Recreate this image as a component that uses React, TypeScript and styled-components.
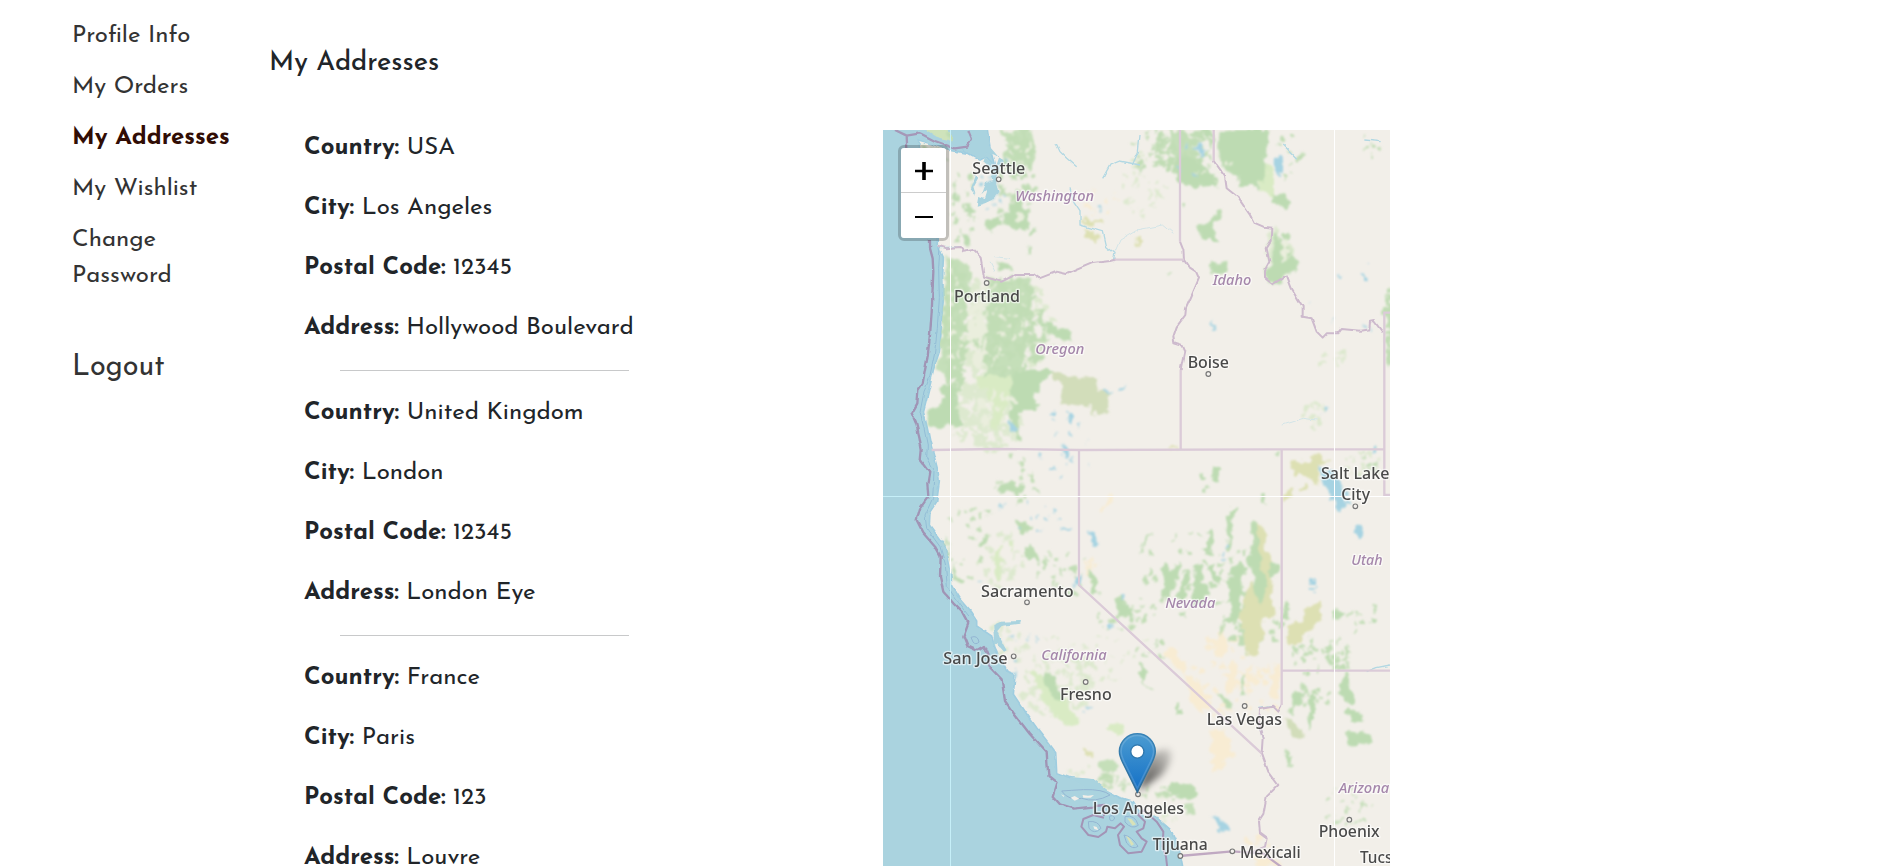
import React from "react";
import styled, { createGlobalStyle } from "styled-components";

const GlobalStyle = createGlobalStyle`
  body {
    margin: 0;
    background: #fff;
    color: #212529;
    font-family: "Josefin Sans", Lato, sans-serif;
    font-size: 24px;
    line-height: 36px;
  }
`;

const Page = styled.div`
  display: flex;
  height: 866px;
  overflow: hidden;
`;

const Sidebar = styled.nav`
  display: flex;
  flex-direction: column;
  gap: 15px;
  box-sizing: border-box;
  width: 269px;
  flex: none;
  padding: 18px 31px 0 72px;
`;

const NavItem = styled.a<{ $active?: boolean }>`
  color: ${(p) => (p.$active ? "#310d05" : "#333")};
  font-weight: ${(p) => (p.$active ? 700 : 400)};
`;

const Logout = styled.a`
  margin-top: 41px;
  font-size: 28.8px;
  color: #333;
`;

const Main = styled.main`
  flex: 1;
`;

const Title = styled.h5`
  margin: 0;
  padding-top: 46px;
  height: 84px;
  font-size: 27px;
  line-height: 36px;
  font-weight: 500;
`;

const Columns = styled.div`
  display: flex;
`;

const AddressList = styled.div`
  width: 579px;
  flex: none;
  padding-left: 35px;
`;

const Address = styled.section`
  display: flex;
  flex-direction: column;
  gap: 24px;
  width: 360px;

  & + & {
    margin-top: 24px;
  }

  &:not(:last-child)::after {
    content: "";
    width: 289px;
    height: 1px;
    margin-left: 36px;
    background: #c8c9ca;
  }
`;

const Field = styled.p`
  margin: 0;
  white-space: nowrap;
`;

const FieldName = styled.strong`
  font-weight: 700;
`;

const MapFrame = styled.div`
  position: relative;
  width: 507px;
  height: 736px;
  overflow: hidden;
  background: #f2efe9;
`;

const MapCanvas = styled.svg`
  display: block;
  width: 507px;
  height: 736px;
`;

const ZoomControl = styled.div`
  position: absolute;
  top: 15px;
  left: 15px;
  display: flex;
  flex-direction: column;
  border: 3px solid rgba(0, 0, 0, 0.2);
  border-radius: 6px;
  background-clip: padding-box;
`;

const ZoomButton = styled.button<{ $first?: boolean }>`
  display: block;
  box-sizing: border-box;
  width: 45px;
  height: 45px;
  padding: 0;
  border: 0;
  border-bottom: ${(p) => (p.$first ? "1px solid #ccc" : "0")};
  border-radius: ${(p) => (p.$first ? "3px 3px 0 0" : "0 0 3px 3px")};
  background: #fff;

  svg {
    display: block;
  }
`;

const CityName = styled.text`
  font-family: "Noto Sans", sans-serif;
  font-size: 46px;
  font-weight: 500;
  fill: #4a4a4a;
  stroke: rgba(255, 255, 255, 0.6);
  stroke-width: 8px;
  stroke-linejoin: round;
  paint-order: stroke;
`;

const StateName = styled(CityName)`
  font-size: 44px;
  font-style: italic;
  fill: #a587ab;
`;

/* Small irregular patches, spread over an ellipse. */
function speckle(seed: number, cx: number, cy: number, rx: number, ry: number, n: number, size: number) {
  let s = seed * 7919 + 13;
  const rnd = () => {
    s = (s * 16807) % 2147483647;
    return s / 2147483647;
  };
  rnd();
  let d = "";
  for (let i = 0; i < n; i++) {
    const a = rnd() * Math.PI * 2;
    const r = Math.sqrt(rnd());
    const x = cx + Math.cos(a) * r * rx;
    const y = cy + Math.sin(a) * r * ry;
    const w = size * (0.4 + rnd());
    const h = size * (0.4 + rnd());
    d += `M${x.toFixed(0)} ${y.toFixed(0)}l${w.toFixed(0)} ${(-h / 3).toFixed(0)}l${(w / 3).toFixed(0)} ${h.toFixed(0)}l${(-w).toFixed(0)} ${(h / 3).toFixed(0)}z`;
  }
  return d;
}

const LAND =
  "M200 15L235 60L262 85L300 105L318 95L345 125L330 70L320 0H1560V2250H912L898 2173L870 2113L830 2078L790 2073L760 2030L720 2018L680 1998L640 1965L570 1958L530 1943L527 1883L505 1853L470 1808L430 1753L400 1708L405 1648L380 1638L345 1568L335 1533L290 1503L290 1485L270 1455L240 1420L215 1380L212 1340L205 1300L195 1265L170 1230L148 1200L150 1160L170 1130L178 1070L172 1030L160 985L150 950L140 900L130 860L145 800L160 735L178 680L185 600L190 520L188 450L190 400L172 360L170 300L150 200L120 100L112 45L150 55L205 75L262 85L240 60z";

const SHORE_LINE =
  "M150 345L150 370L158 400L160 440L155 560L150 630L142 700L135 735L128 775L115 795L112 835L95 865L108 895L118 935L125 975L122 1005L148 1040L142 1075L145 1115L120 1150L110 1185L130 1225L165 1265L182 1295L180 1355L190 1400L220 1435L250 1465L265 1493L250 1533L262 1563L290 1576L312 1563L325 1593L328 1625L365 1663L375 1728L400 1763L450 1828L500 1883L505 1953L530 1973L518 2013L540 2038L580 2051L640 2045L670 2040L672 2070";

const INNER_LINE =
  "M180 365L176 430L178 520L172 610L163 690L148 760L132 800L120 862L132 910L142 960L140 1000L162 1040L158 1120L135 1170L140 1210L180 1265L196 1320L202 1385L235 1432L268 1475";

const RIVER_BORDERS = [
  "M176 362L200 370L240 366L250 380L280 375L302 398L312 455L365 470L410 447L460 447L478 460L530 440L560 447L635 415L690 408L704 404",
  "M900 350L910 375L912 405L925 425L948 440L957 460L940 500L918 550L916 570L890 605L880 635L883 655L905 662L913 680L902 735",
  "M1001 108L1035 155L1040 190L1072 215L1110 270L1122 293L1150 305L1177 308L1175 345L1160 370L1168 410L1155 435V460L1178 478L1205 460L1220 450L1235 490L1268 545V575L1295 580L1310 620L1328 638L1340 625L1375 625L1385 612L1440 617L1468 613L1470 590L1482 588L1508 622",
  "M1205 1740L1195 1760L1180 1745L1140 1753L1137 1800L1148 1840L1145 1885L1165 1940L1195 1980L1160 2015L1150 2070L1137 2090L1140 2125L1160 2140L1155 2165L1115 2182",
];

const STRAIGHT_BORDERS = [
  "M704 404H912",
  "M900 15V350M1001 15V108M902 735V972",
  "M155 975L350 972L600 975L1200 973L1511 973",
  "M597 975V1380L1145 1885",
  "M1205 975V1740",
  "M1205 1637H1540",
  "M1540 563H1513V1110H1540",
];

const WATER_COASTAL = [
  "M9 10H200L225 60L262 80L300 105L310 90L345 125L355 95L325 60L320 10H45L80 35L130 40L205 72z",
  "M320 80L345 90L370 105L360 128L348 170L355 200L335 225L315 235L290 242L295 215L315 222L325 190L305 210L318 175L340 165L328 130L310 112z",
  "M285 150L270 190L285 210L277 185L292 158z",
  "M340 1500L362 1490L420 1488L418 1496L365 1503L352 1518L362 1545L380 1576L372 1580L350 1555L342 1560z",
  "M570 1958L640 1962L700 2010L640 2000z",
];

const LAKES = [
  "M950 60l15 -5l15 20l-12 18l-10 12l-5 -5l8 -15l-8 -14l-15 5z",
  "M1182 100l12 -12l12 20l0 30l-12 10l-14 -20z",
  "M1442 440l12 5l10 25l-4 6l-14 -20z",
  "M545 965l15 0l4 12l-8 20l-12 -6z",
  "M1320 1020l40 20l35 60l10 40l-15 5l-18 -16l-15 0l-28 -60z",
  "M1315 1020l20 5l35 50l10 60l-20 0l-30 -60z",
  "M1365 1115l35 15l-10 24l-25 -10z",
  "M628 1220l14 0l14 38l-10 4l-18 -18z",
  "M583 1350l18 -2l4 20l-8 16l-16 -10z",
  "M565 875l14 0l-2 20l-10 -2z",
  "M385 895l12 0l14 18l-4 18l-18 -16z",
  "M1428 1200l12 -4l12 25l-12 18l-12 -16z",
  "M1476 960l12 -4l0 30l-10 4z",
  "M1326 860l14 -24l10 8l-16 14l-18 12z",
  "M1000 2075l15 0l35 35l-5 14l-20 -6z",
  "M685 1500l18 0l2 12l-14 4z",
  "M387 1645l20 -8l6 18l-12 25l-12 -10z",
  "M545 1208h30v6h-30z",
  "M992 590l6 0l2 25l-8 -2z",
  "M372 108l10 4l-4 8zM650 245l15 5l5 8l-15 -3z",
  "M515 1150l10 5l-8 14l-5 -2zM470 1207l15 6l-8 5zM612 1750h25l-4 6h-20z",
  "M1030 1268h8v7h-8zM1030 1285h8v7h-8zM1030 1303h8v7h-8z",
  "M1290 1365h18v6h-20zM1290 1380h16v5h-18zM1290 1397h14v5h-14z",
  "M350 1140l25 2l-20 10zM515 858h10v7h-10zM480 985h8v12h-10zM295 1365h12l-5 8zM578 1005h8v8h-8z",
  "M725 1405l8 4l0 18l-8 4zM675 800h18v6h-18zM715 785l16 -4l-12 14z",
];

const RIVERS = [
  "M528 55L540 80L560 100L590 125",
  "M668 160L690 120L720 108L780 120",
  "M570 190L580 230L600 260L600 300L670 320L680 365L705 385L700 405",
  "M240 366L180 368",
  "M1210 60L1235 85L1250 100M1450 45L1505 50",
  "M1460 1640L1490 1628L1530 1620",
  "M1138 1750L1175 1745M1137 1800L1148 1840",
  "M780 30L775 80L757 120",
];

const STREAMS = [
  "M705 380L720 345L770 315L850 300L880 325",
  "M1205 900L1270 880L1310 885",
  "M340 395L390 400M330 410L345 440",
];

const FOREST = [
  "M115 50l15 15l35 8l30 15l15 20l-30 -4l-50 -20z",
  "M195 20l60 -5l5 20l-15 25l-40 -20z",
  "M390 235l30 -10l20 30l8 45l-20 15l-50 -15l-12 -25l20 -5z",
  "M250 260l20 -18l16 15l-18 22zM315 290l45 -14l10 15l-40 25l-20 -10z",
  "M355 415l20 5l25 10l-8 8l-38 -8zM440 365l14 0l-4 20l-14 5zM450 315l16 -5l0 15l-12 6z",
  "M220 205l15 0l2 20l-18 5zM250 325l22 0l8 20l-20 18l-12 -15z",
  "M480 600l40 -8l20 15l35 15l0 30l-30 -5l-25 -15z",
  "M185 785l45 -5l5 60l0 25l10 30l-40 10l-55 0l-5 -20l-4 -25l40 -18z",
  "M430 735h90l-10 20l-30 20l-5 25l-20 10l20 25l0 20l-45 0l-15 30l0 30l15 20l-12 12l-20 -30l-8 -60l0 -60l15 -50z",
  "M365 1080l30 -20l15 25l20 -10l8 25l-28 6l-25 -10l-20 5zM455 1085l18 5l-4 15z",
  "M408 1190l25 -5l5 18l20 0l0 10l-30 18l-15 -20z",
  "M440 1260l25 15l15 35l-12 5l-25 -20zM300 1250l20 -15l0 20l-18 6zM310 1165l30 -10l-10 18z",
  "M190 1230l15 15l0 60l30 50l20 10l-15 8l-25 -15l-5 -80z",
  "M880 95l60 0l5 15l35 10l15 25l20 15l-5 25l-80 5l-30 -20l-15 -25l0 -30z",
  "M1022 15h140l0 65l-5 65l-20 30l0 20l-25 -15l-30 0l-20 -30l-35 -20l-10 -50z",
  "M960 15h40v25l-20 -5z",
  "M990 275l15 -10l20 -12l0 20l-20 15l-5 35l15 25l-45 0l-10 -30l-10 -15l30 -5z",
  "M995 412h50l0 18l-15 18l-15 -2l-20 2l-8 -16z",
  "M1185 325l15 10l10 70l20 -10l30 20l-30 30l-35 25l-15 12l-22 -15l0 -30l20 -20z",
  "M1210 320l18 0l0 60l-8 20l-12 -20z",
  "M1180 205l40 10l15 20l-10 12l-30 -10l-16 -10zM905 235l14 5l-12 8zM860 440l10 -5l6 10l-14 4z",
  "M1000 1020l18 0l-4 55l-12 0l-6 -25zM955 1050l15 5l5 10l-14 -2zM973 1090l12 -5l-6 15z",
  "M1145 1105l12 0l0 35l-10 -4zM1185 980l20 -5l-15 10z",
  "M1050 1150l22 -10l-10 40l-10 60l0 40l-12 0l0 -50z",
  "M985 1220l15 0l-2 60l5 15l-14 0l-10 -14l-20 -5l25 -10zM800 1230l20 -15l-30 50l-12 20z",
  "M840 1320l20 -5l20 20l-20 70l-15 20l-5 -20l10 -30zM900 1320l-5 30l-30 70l-20 0l10 -50l40 -60z",
  "M910 1345l20 -5l-15 70l-12 25l-10 -20zM945 1320l20 -5l0 60l20 10l-10 40l-20 20l-20 10l5 -60z",
  "M1055 1325l30 -15l15 20l-20 40l10 30l-20 20l-5 30l-15 -25l0 -60z",
  "M1112 1195l20 0l0 50l10 80l15 50l-10 60l-20 0l0 -80l-20 -40l10 -60z",
  "M1170 1310l20 5l5 35l-20 15l-12 -15zM985 1320l20 0l0 25l18 10l-10 25l-20 -25z",
  "M1060 1430l20 0l0 50l-30 15l-20 -5l20 -20zM1205 1430l15 -10l10 60l-20 5zM900 1460l15 0l5 16l-18 -5z",
  "M1355 1460l20 -5l15 20l-25 10zM1470 1480l20 0l0 16l-15 4z",
  "M780 1620l10 0l5 60l25 10l-5 8l-25 -18l-10 -30zM890 1730l10 -5l0 35l-10 4z",
  "M1090 1640l8 0l-5 70l-12 0zM1015 1708l30 10l12 30l-15 0z",
  "M1395 1640l10 -5l5 60l15 40l-20 5l-25 -35zM1400 1745l40 15l5 30l-20 0l-30 -30z",
  "M1400 1820l60 5l10 15l-15 18l-40 10l-18 -22z",
  "M1290 1715l15 -5l0 70l-14 40l-6 -40zM1240 1700l25 -5l0 40l-20 15zM1220 1875l8 0l4 40l-10 6z",
  "M620 1325l30 20l5 60l-15 5z",
  "M870 1975l60 0l25 20l-10 20l-60 0l-20 -15z",
  "M560 1400l25 -10l5 20l-30 10zM705 1420l20 -10l20 40l15 10l0 30l-20 -20l-20 10z",
  "M490 1640l20 0l35 60l5 30l-20 5l-30 -50z",
];

const FOREST_LIGHT = [
  "M360 20l95 -5l10 60l-5 50l-45 20l0 -45l-30 -30z",
  "M200 395l50 15l25 20l-5 60l-10 60l-10 50l-15 100l-20 50l-45 -20l20 -130z",
  "M330 500l60 -40l65 0l0 80l-15 60l8 60l-20 60l10 20l-30 10l-90 0l-15 -90l20 -90z",
  "M865 20l60 0l25 60l-5 60l-60 0l-10 -70z",
  "M655 1910l40 -10l15 20l0 20l-45 5l-15 -16zM918 2035l20 0l10 30l-30 8z",
];

const WOODS_PALE = [
  "M300 745l60 -10l40 20l-10 60l-30 70l-15 40l-10 -80l-20 -50l-25 -10z",
  "M1140 130l25 -10l20 40l0 60l-25 -20l-20 0z",
  "M345 1280l20 -20l5 60l-15 50l-12 -20zM385 1240l12 20l-4 25z",
  "M455 1633l55 30l40 60l50 70l-30 15l-50 -45l-40 -50z",
  "M690 1798l45 -5l0 20l-20 25l-25 -20z",
];

const RANGE = [
  "M515 735l35 10l40 15l55 0l5 40l35 0l0 65l-50 0l0 -20l-90 -10l0 -60l-20 -20z",
  "M1215 1780l15 0l35 40l5 15l-25 5l-20 -25z",
];

const SCRUB = [
  "M1230 1020l20 -15l40 5l20 -25l15 0l20 25l-30 10l0 60l-40 -30l-30 0z",
  "M1125 1195l15 5l20 25l0 50l20 30l-5 60l0 50l10 50l-15 20l-90 0l15 -70l20 -50l20 30l0 -60z",
  "M605 280l20 5l45 0l0 8l-60 4zM615 315l15 5l28 15l-8 18l-30 -20z",
  "M1270 1460l50 -30l5 60l-25 20l-50 50l-40 -20l20 -35l40 -20z",
  "M1080 1475l60 0l10 60l-30 60l-20 -10l-10 -60z",
  "M1210 1110l30 -25l0 20l-30 30zM1270 1075l12 0l-4 30l-10 -5zM770 335l10 -3v30l-10 0z",
  "M610 1870l35 18l-8 8l-25 -14zM870 964h30v6h-40z",
];

const SAND = [
  "M855 1575l40 -5l5 30l25 30l-15 10l-30 -20l-20 -20z",
  "M910 1640l40 30l30 40l-10 50l-30 -20l-10 -40z",
  "M1010 1520l20 -10l15 30l-10 50l-20 10l-10 -30zM1050 1600l20 30l-5 60l-25 20l-10 -30l10 -30z",
  "M1185 1620l15 0l5 40l-15 60l-20 0l5 -50zM990 1820l40 -10l15 40l20 40l-30 15l-20 40l-20 -5l5 -50z",
  "M680 1115l15 -5l-10 30l-20 20zM1120 2190l60 5l20 30h-70z",
];

type Label = [name: string, x: number, y: number, width: number];

const CITIES: Label[] = [
  ["Seattle", 277, 146, 159],
  ["Portland", 222, 530, 198],
  ["Boise", 923, 730, 124],
  ["Sacramento", 303, 1415, 278],
  ["San Jose", 190, 1617, 193],
  ["Fresno", 540, 1724, 155],
  ["Las Vegas", 980, 1799, 226],
  ["Los Angeles", 638, 2066, 274],
  ["Tijuana", 818, 2176, 165],
  ["Mexicali", 1080, 2198, 182],
  ["Phoenix", 1316, 2135, 183],
  ["Salt Lake", 1323, 1063, 205],
  ["City", 1384, 1125, 86],
];

const STATES: Label[] = [
  ["Washington", 406, 228, 236],
  ["Oregon", 466, 686, 147],
  ["Idaho", 998, 479, 116],
  ["Nevada", 856, 1448, 150],
  ["Utah", 1414, 1321, 94],
  ["California", 484, 1605, 196],
  ["Arizona", 1376, 2003, 152],
];

const DOTS = [
  [356, 163], [320, 474], [985, 747], [441, 1432], [401, 1594], [617, 1671],
  [1094, 1743], [774, 2008], [901, 2193], [1057, 2179], [1408, 2084], [1426, 1144],
];

const FOREST_SPECKLE =
  speckle(1, 900, 70, 90, 60, 90, 13) + speckle(2, 800, 70, 60, 60, 30, 10) +
  speckle(3, 400, 200, 60, 110, 40, 13) + speckle(4, 245, 250, 40, 120, 22, 11) +
  speckle(5, 380, 600, 110, 150, 150, 16) + speckle(6, 215, 600, 35, 200, 130, 16) +
  speckle(45, 410, 80, 50, 60, 50, 14) +
  speckle(7, 400, 1060, 60, 80, 16, 12) + speckle(8, 250, 1240, 60, 120, 16, 12) +
  speckle(9, 550, 1330, 90, 70, 26, 10) + speckle(10, 900, 1330, 130, 110, 30, 12) +
  speckle(11, 1060, 1380, 60, 130, 40, 12) + speckle(12, 1320, 1590, 90, 60, 50, 12) +
  speckle(13, 1280, 1720, 60, 60, 18, 12) + speckle(14, 1400, 2040, 80, 60, 24, 8) +
  speckle(15, 740, 1470, 90, 60, 30, 10) + speckle(16, 820, 1580, 60, 60, 12, 10) +
  speckle(17, 690, 1970, 60, 25, 20, 10) + speckle(18, 860, 2000, 90, 25, 26, 9) +
  speckle(19, 1460, 60, 30, 40, 5, 9) + speckle(20, 1215, 100, 40, 100, 10, 10) +
  speckle(21, 1522, 600, 12, 110, 60, 14) + speckle(22, 1100, 1500, 90, 70, 30, 14) +
  speckle(23, 1440, 1480, 60, 40, 12, 10) + speckle(24, 1470, 1000, 30, 50, 14, 8);

const PALE_SPECKLE =
  speckle(31, 310, 860, 110, 110, 220, 16) + speckle(32, 290, 600, 80, 150, 90, 18) +
  speckle(33, 520, 1680, 110, 110, 90, 13) + speckle(34, 620, 1640, 90, 60, 34, 11) +
  speckle(35, 380, 1540, 60, 60, 22, 11) + speckle(36, 360, 1300, 70, 90, 40, 11) +
  speckle(37, 790, 180, 70, 100, 40, 10) + speckle(38, 1180, 380, 40, 70, 40, 15) +
  speckle(39, 620, 1950, 80, 30, 16, 10) + speckle(40, 880, 2040, 60, 60, 24, 9) +
  speckle(41, 1440, 1010, 50, 40, 20, 10) + speckle(42, 520, 1590, 120, 60, 24, 9) +
  speckle(43, 450, 600, 60, 120, 50, 13) + speckle(44, 700, 1560, 90, 60, 16, 9) +
  speckle(46, 1300, 850, 30, 60, 24, 10) + speckle(47, 1340, 690, 50, 30, 14, 10);

const SAND_SPECKLE =
  speckle(51, 1020, 1640, 90, 130, 50, 13) + speckle(52, 620, 1340, 30, 60, 14, 9) +
  speckle(53, 1140, 2160, 60, 30, 12, 12) + speckle(54, 1120, 1700, 70, 90, 30, 12) +
  speckle(55, 660, 220, 60, 60, 12, 8);

const LAKE_SPECKLE =
  speckle(61, 330, 190, 45, 60, 20, 8) + speckle(62, 560, 950, 90, 110, 12, 7) +
  speckle(63, 480, 1180, 130, 60, 7, 7) + speckle(64, 1400, 500, 120, 140, 6, 6) +
  speckle(65, 430, 1560, 80, 50, 7, 6) + speckle(66, 920, 110, 30, 60, 6, 8);

const CLEARINGS =
  speckle(71, 285, 590, 26, 130, 34, 20) + speckle(72, 330, 840, 50, 60, 20, 18) +
  speckle(73, 370, 600, 80, 130, 40, 9) + speckle(74, 215, 560, 30, 150, 20, 9) +
  speckle(75, 410, 80, 45, 60, 16, 9) + speckle(76, 1000, 130, 60, 60, 14, 8) +
  speckle(77, 410, 272, 8, 6, 3, 14) + speckle(78, 1200, 360, 12, 40, 10, 12);

function Islands() {
  return (
    <g filter="url(#soft)">
      <g fill="none" stroke="#a394b6" strokeWidth={6} strokeLinejoin="round">
        <path d="M672 2078L640 2070L610 2082L604 2105L625 2130L655 2136L678 2120L682 2105L705 2110L722 2095L732 2105L714 2130L720 2160L745 2185L785 2180L800 2150L785 2140L770 2120L790 2110L795 2090L775 2070L790 2055L830 2090L850 2120L848 2165L858 2195L862 2230" />
      </g>
      <g fill="none" stroke="#93b5d2" strokeWidth={3}>
        <path d="M545 1998q20 30 60 22q40 14 85 -10q-20 -18 -80 -16q-40 2 -65 4z" />
        <path d="M625 2090q30 -4 38 20q-20 20 -36 0zM735 2075q30 -8 40 26q-20 14 -40 -10zM732 2130q24 4 42 34q-16 12 -34 -10z" />
        <path d="M273 1537q20 -8 24 14q-10 10 -18 0zM688 2075q10 -8 16 4q-4 12 -14 6z" />
      </g>
      <g fill="#f2efe9">
        <path d="M572 2018l12 -5l14 8l-14 6zM608 2010l16 2l18 -2l-10 8h-22zM640 2103l10 3l5 10l-12 -4zM543 2008l10 4l-2 4z" />
        <path d="M742 2080l12 2l14 16l-10 4zM738 2132l10 6l14 20l-8 4z" fill="#d9e2b8" />
      </g>
    </g>
  );
}

function MapTiles() {
  const area = { filterUnits: "userSpaceOnUse", x: -10, y: -10, width: 1570, height: 2270 } as const;
  return (
    <MapCanvas viewBox="9 15 1521 2208" role="img" aria-label="Map">
      <defs>
        <filter id="rough" {...area}>
          <feTurbulence type="fractalNoise" baseFrequency="0.035" numOctaves={3} seed={4} result="n" />
          <feDisplacementMap in="SourceGraphic" in2="n" scale={34} xChannelSelector="R" yChannelSelector="G" />
          <feGaussianBlur stdDeviation="2.4" />
        </filter>
        <filter id="wobble" {...area}>
          <feTurbulence type="fractalNoise" baseFrequency="0.03" numOctaves={2} seed={9} result="n" />
          <feDisplacementMap in="SourceGraphic" in2="n" scale={13} xChannelSelector="R" yChannelSelector="G" />
          <feGaussianBlur stdDeviation="1.6" />
        </filter>
        <filter id="soft" {...area}>
          <feGaussianBlur stdDeviation="1.3" />
        </filter>
        <filter id="shade" {...area}>
          <feGaussianBlur stdDeviation="11" />
        </filter>
        <clipPath id="land">
          <path d={LAND} />
          <path d="M115 15H280L270 45L235 60L150 40z" />
        </clipPath>
        <linearGradient id="pin" x1="0" y1="0" x2="0" y2="1">
          <stop offset="0" stopColor="#4c9cd1" />
          <stop offset="1" stopColor="#126fc6" />
        </linearGradient>
        <linearGradient id="pinEdge" x1="0" y1="0" x2="0" y2="1">
          <stop offset="0" stopColor="#3883b7" />
          <stop offset="1" stopColor="#2e6c97" />
        </linearGradient>
        <linearGradient id="shadow" gradientUnits="userSpaceOnUse" x1="776" y1="1998" x2="880" y2="1880">
          <stop offset="0" stopOpacity={0.75} />
          <stop offset="1" stopOpacity={0.12} />
        </linearGradient>
      </defs>

      <rect x="0" y="0" width="1540" height="2240" fill="#aad3df" />
      <g filter="url(#wobble)">
        <path d={LAND} fill="#f2efe9" stroke="#9fcde0" strokeWidth={5} />
        <path d="M115 0H265L268 40L240 55L170 35z" fill="#cfe3bb" />
      </g>

      <g clipPath="url(#land)">
        <g filter="url(#rough)">
          <path d={PALE_SPECKLE} fill="#dde9cf" />
          <path d={WOODS_PALE.join("")} fill="#d9ebc4" />
          <path d={SAND.join("") + SAND_SPECKLE} fill="#f8ecd3" />
          <path d={RANGE.join("")} fill="#d2ddba" />
          <path d={FOREST_LIGHT.join("")} fill="#c5dfb9" />
          <path d={FOREST_SPECKLE} fill="#c1ddb5" />
          <path d={SCRUB.join("")} fill="#dde0b3" />
          <path d={FOREST.join("")} fill="#bddbb2" />
          <path d={CLEARINGS} fill="#eaeedd" />
          <path d={LAKES.join("") + LAKE_SPECKLE} fill="#a6d3e2" />
        </g>
      </g>
      <g filter="url(#wobble)">
        <path d={WATER_COASTAL.join("")} fill="#a9d3df" />
        <path d={RIVERS.join("")} fill="none" stroke="#b2d8e3" strokeWidth={4} />
        <path d={STREAMS.join("")} fill="none" stroke="#d3e5e8" strokeWidth={3} />
      </g>

      <g filter="url(#wobble)" fill="none" strokeLinejoin="round">
        <path d={INNER_LINE} stroke="#93bdd6" strokeWidth={3} />
        <path d="M45 15L80 32L82 70M80 32L120 25L165 48L225 70L262 65L276 42L265 15" stroke="#a598b8" strokeWidth={7} />
        <path d={SHORE_LINE} stroke="#a094b5" strokeWidth={7} />
        <path d={RIVER_BORDERS.join("")} stroke="#cdbacd" strokeWidth={6} />
      </g>
      <g filter="url(#soft)" fill="none">
        <path d={STRAIGHT_BORDERS.join("")} stroke="#dbcbd8" strokeWidth={7} />
        <path d="M898 2193L1057 2179L1150 2186L1210 2230" stroke="#c0a9c2" strokeWidth={7} />
      </g>
      <Islands />

      <g fill="#c6eff8">
        <rect x="210" y="15" width="3" height="2210" />
        <rect x="9" y="1113" width="1521" height="3" />
      </g>
      <g fill="#fff">
        <rect x="210" y="75" width="3" height="1270" />
        <rect x="1362" y="15" width="3" height="2210" />
        <rect x="160" y="1113" width="1370" height="3" />
      </g>

      <g filter="url(#soft)">
        {DOTS.map(([x, y]) => (
          <circle key={`${x}-${y}`} cx={x} cy={y} r={7} fill="#f4f2ee" stroke="#777" strokeWidth={3.5} />
        ))}
        {STATES.map(([name, x, y, width]) => (
          <StateName key={name} x={x} y={y} textLength={width} lengthAdjust="spacingAndGlyphs">
            {name}
          </StateName>
        ))}
        {CITIES.map(([name, x, y, width]) => (
          <CityName key={name} x={x} y={y} textLength={width} lengthAdjust="spacingAndGlyphs">
            {name}
          </CityName>
        ))}
        <CityName x={1440} y={2213}>
          Tucson
        </CityName>
      </g>

      <path d="M776 1998L806 1900Q830 1870 868 1872Q885 1900 845 1950z" fill="url(#shadow)" filter="url(#shade)" />
      <g transform="translate(716 1824) scale(4.48)">
        <path
          d="M12.5 0.5C5.9 0.5 0.5 5.9 0.5 12.3C0.5 15 1.4 17.2 2.6 19.6L12.5 39.6L22.4 19.6C23.6 17.2 24.5 15 24.5 12.3C24.5 5.9 19.1 0.5 12.5 0.5z"
          fill="url(#pin)"
          stroke="url(#pinEdge)"
          strokeWidth={1}
        />
        <path
          d="M12.5 1.6C6.5 1.6 1.6 6.5 1.6 12.3C1.6 14.7 2.5 16.8 3.6 19.1L12.5 37.1L21.4 19.1C22.5 16.8 23.4 14.7 23.4 12.3C23.4 6.5 18.5 1.6 12.5 1.6z"
          fill="none"
          stroke="#fff"
          strokeOpacity={0.15}
          strokeWidth={1.1}
        />
        <circle cx={12.5} cy={12.4} r={4.4} fill="#fff" stroke="#2f77ad" strokeWidth={0.9} />
      </g>
    </MapCanvas>
  );
}

const ADDRESSES = [
  { Country: "USA", City: "Los Angeles", "Postal Code": "12345", Address: "Hollywood Boulevard" },
  { Country: "United Kingdom", City: "London", "Postal Code": "12345", Address: "London Eye" },
  { Country: "France", City: "Paris", "Postal Code": "123", Address: "Louvre" },
];

export default function App() {
  return (
    <>
      <GlobalStyle />
      <Page>
        <Sidebar>
          <NavItem>Profile Info</NavItem>
          <NavItem>My Orders</NavItem>
          <NavItem $active>My Addresses</NavItem>
          <NavItem>My Wishlist</NavItem>
          <NavItem>Change Password</NavItem>
          <Logout>Logout</Logout>
        </Sidebar>
        <Main>
          <Title>My Addresses</Title>
          <Columns>
            <AddressList>
              {ADDRESSES.map((address) => (
                <Address key={address.Country}>
                  {Object.entries(address).map(([name, value]) => (
                    <Field key={name}>
                      <FieldName>{name}:</FieldName> {value}
                    </Field>
                  ))}
                </Address>
              ))}
            </AddressList>
            <MapFrame>
              <MapTiles />
              <ZoomControl>
                <ZoomButton $first aria-label="Zoom in">
                  <svg width="45" height="44" viewBox="0 0 45 44">
                    <path d="M14 21.7h18v2.6H14zM21.2 14h3.6v18h-3.6z" />
                  </svg>
                </ZoomButton>
                <ZoomButton aria-label="Zoom out">
                  <svg width="45" height="45" viewBox="0 0 45 45">
                    <path d="M14 23h18v2H14z" />
                  </svg>
                </ZoomButton>
              </ZoomControl>
            </MapFrame>
          </Columns>
        </Main>
      </Page>
    </>
  );
}
